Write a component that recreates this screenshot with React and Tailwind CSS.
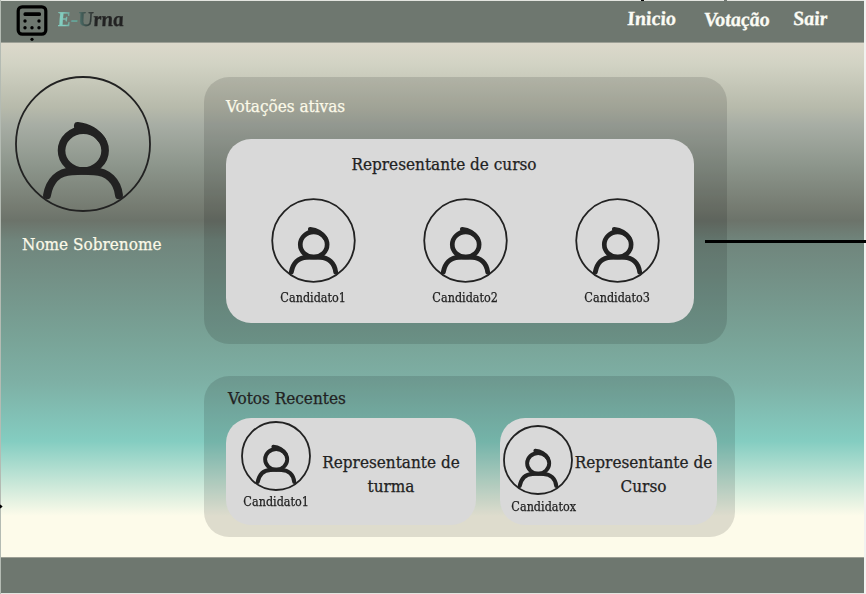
import clsx from "clsx";

const slab = "font-['DejaVu_Serif_Condensed','DejaVu_Serif',serif] [font-stretch:condensed] whitespace-nowrap [-webkit-text-stroke:0.25px_currentColor]";
const script = "font-['Liberation_Serif',serif] font-bold italic whitespace-nowrap [-webkit-text-stroke:0.3px_currentColor]";

function Avatar({ className }) {
  return (
    <svg viewBox="40 44 418 418" className={clsx("block shrink-0", className)} fill="none" stroke="#222222">
      <circle cx="249" cy="253" r="203" strokeWidth="1.8" vectorEffect="non-scaling-stroke" />
      <ellipse cx="250" cy="273" rx="66" ry="62" strokeWidth="23" />
      <path d="M233 198C262 201 290 216 307 242" strokeWidth="23" strokeLinecap="round" />
      <path d="M206 322C235 338 263 338 292 322" strokeWidth="14" />
      <path
        d="M140 408C148 365 174 337 216 336Q249 333 282 336C324 337 353 365 358 408"
        strokeWidth="24"
        strokeLinecap="round"
      />
    </svg>
  );
}

function Candidate({ name }) {
  return (
    <div className="flex w-[152px] flex-col items-center">
      <Avatar className="size-[85px]" />
      <span className={clsx(slab, "mt-[5px] scale-x-[0.96] text-[13px] leading-5 text-[#222222]")}>{name}</span>
    </div>
  );
}

function BallotIcon() {
  return (
    <svg viewBox="0 0 32 38" className="h-[38px] w-8">
      <rect x="2.2" y="2.8" width="27.6" height="27.4" rx="4" fill="none" stroke="#000" strokeWidth="3.2" />
      <rect x="7.5" y="8.2" width="17.5" height="3.8" rx="1.5" />
      <circle cx="9" cy="17" r="1.7" />
      <circle cx="23" cy="17" r="1.7" />
      <circle cx="9" cy="23.8" r="1.7" />
      <circle cx="16" cy="23.8" r="1.7" />
      <circle cx="23" cy="23.8" r="1.7" />
      <circle cx="16" cy="35.3" r="1.6" />
    </svg>
  );
}

export default function App() {
  return (
    <div className="relative flex h-[594px] w-[866px] flex-col border-r-2 border-l border-r-[#f2f2f0] border-l-[#b4bbb3] bg-[#e3e5e0] pt-px">
      <header className="flex h-[42px] shrink-0 items-start border-b border-[#9da096] bg-[#6e776f] pt-[3px] pl-[15px]">
        <BallotIcon />
        <h1
          className={clsx(
            script,
            "mt-[3px] ml-[9px] origin-left skew-x-6 bg-linear-to-r from-[#82cdbf] from-10% via-[#3d5450] via-38% to-[#222222] to-55% bg-clip-text pr-1 text-[21px] leading-6 text-transparent"
          )}
        >
          E<span className="text-[#68a196]">-</span>Urna
        </h1>
        <nav className={clsx(script, "ml-auto flex text-xl leading-6 text-[#fbfbf4]")}>
          <a className="mt-0.5 w-[77px] skew-x-6">Inicio</a>
          <a className="mt-[3px] w-[89px] skew-x-6">Votação</a>
          <a className="mt-0.5 w-[71px] skew-x-6">Sair</a>
        </nav>
      </header>

      <main className="flex h-[514px] shrink-0 bg-[linear-gradient(to_bottom,#dcd9cb_0%,#d2d3c4_4%,#b7baab_12.5%,#a7ada4_16%,#8c958b_24%,#757b71_32%,#6c736a_34.5%,#70857c_38.5%,#79a498_58%,#7eb0a5_66%,#84cdc1_77.5%,#fdfbea_92%,#fdfbea_100%)]">
        <aside className="flex w-[203px] flex-col pt-[32px] pl-[13px]">
          <Avatar className="size-[138px]" />
          <span className={clsx(slab, "mt-[19px] ml-2 text-[17px] leading-6 text-[#fbf9e8]")}>
            Nome Sobrenome
          </span>
        </aside>

        <div className="flex flex-col items-start gap-8 pt-[34px]">
          <section className="h-[267px] w-[523px] rounded-[25px] bg-black/[0.12] pl-[22px]">
            <h2 className={clsx(slab, "h-[62px] w-fit pt-[17px] text-[17px] leading-6 text-[#fbf9e8]")}>
              Votações ativas
            </h2>
            <div className="flex h-[184px] w-[468px] flex-col items-center rounded-[25px] bg-[#d9d9d9] pt-[13px]">
              <h3 className={clsx(slab, "mr-8 text-[17px] leading-6 text-[#222222]")}>Representante de curso</h3>
              <div className="mt-[22px] ml-[11px] flex">
                <Candidate name="Candidato1" />
                <Candidate name="Candidato2" />
                <Candidate name="Candidato3" />
              </div>
            </div>
          </section>

          <section className="h-[161px] w-[531px] rounded-[25px] bg-black/[0.12] pl-[22px]">
            <h2 className={clsx(slab, "ml-0.5 h-[42px] w-fit pt-2.5 text-[17px] leading-6 text-[#222222]")}>
              Votos Recentes
            </h2>
            <div className="flex gap-6">
              <div className="flex h-[107px] w-[250px] rounded-[25px] bg-[#d9d9d9] pt-[3px] pl-[15px]">
                <div className="flex w-[70px] flex-col items-center">
                  <Avatar className="size-[70px]" />
                  <span className={clsx(slab, "mt-px scale-x-[0.96] text-[13px] leading-5 text-[#222222]")}>Candidato1</span>
                </div>
                <p className={clsx(slab, "mt-[29px] ml-[5px] w-[150px] text-center text-[17px] leading-6 text-[#222222]")}>
                  Representante de<br />turma
                </p>
              </div>
              <div className="flex h-[107px] w-[217px] rounded-[25px] bg-[#d9d9d9] pt-[7px] pl-[3px]">
                <div className="flex w-[70px] flex-col items-center">
                  <Avatar className="size-[70px]" />
                  <span className={clsx(slab, "ml-[11px] mt-0.5 scale-x-[0.96] text-[13px] leading-5 text-[#222222]")}>Candidatox</span>
                </div>
                <p className={clsx(slab, "mt-[25px] -ml-[3px] w-[150px] text-center text-[17px] leading-6 text-[#222222]")}>
                  Representante de<br />Curso
                </p>
              </div>
            </div>
          </section>
        </div>
      </main>

      <footer className="h-9 shrink-0 border-t border-[#9da096] bg-[#6e776f]" />

      <div className="absolute top-[240px] -right-0.5 h-[3px] w-[161px] bg-black" />
      <div className="absolute top-[505px] -left-0.5 size-[3px] rotate-45 bg-black" />
      <div className="absolute top-0 left-[640px] h-px w-[3px] bg-black" />
      <div className="absolute top-0 left-[723px] h-px w-[3px] bg-[#6f756f]" />
    </div>
  );
}
